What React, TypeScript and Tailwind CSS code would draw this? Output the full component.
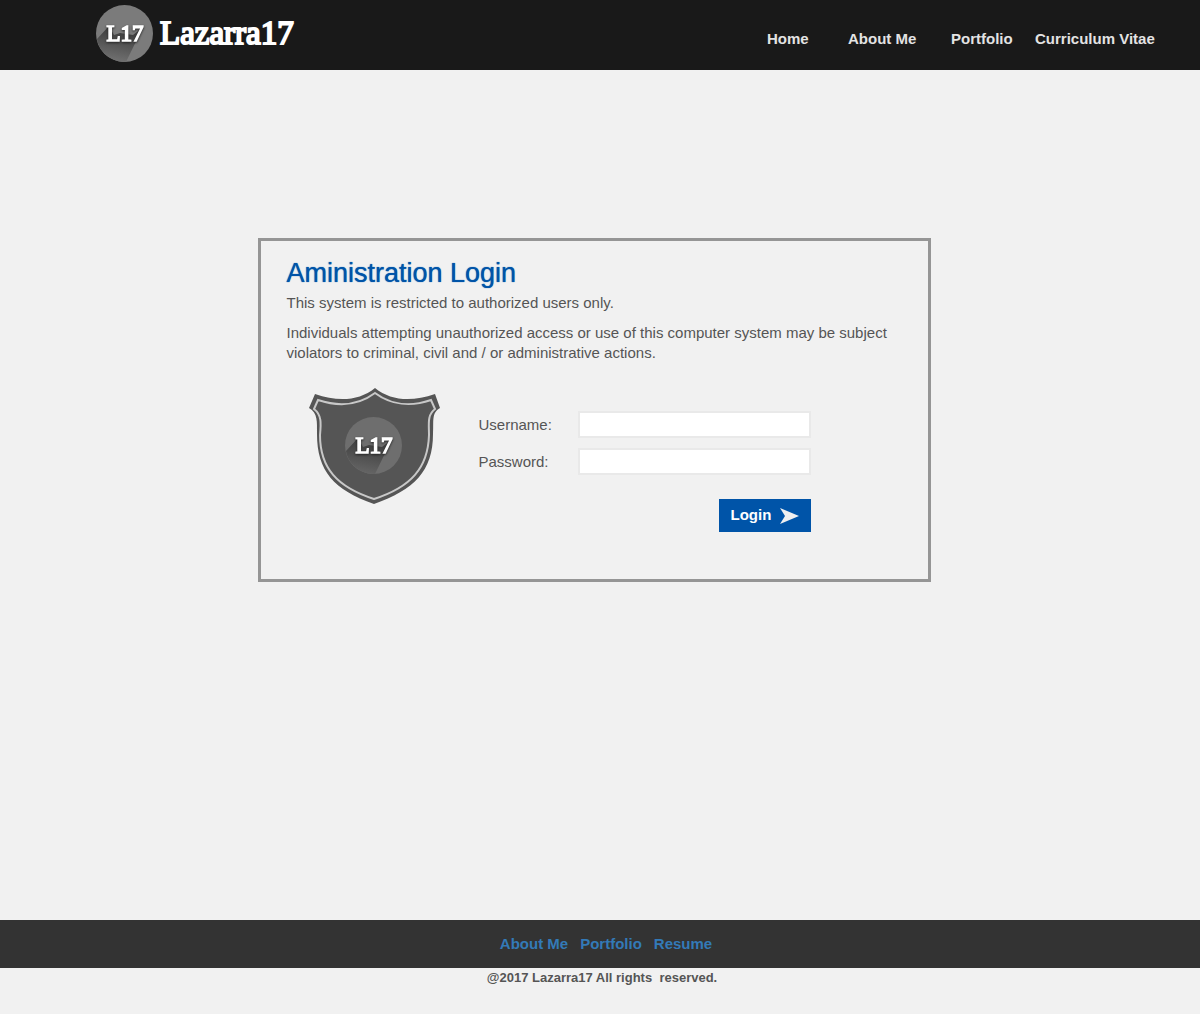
import { useId } from "react";

const navLinks = [
  { label: "Home", width: "w-[81px]" },
  { label: "About Me", width: "w-[103px]" },
  { label: "Portfolio", width: "w-[84px]" },
  { label: "Curriculum Vitae", width: "w-[120px]" },
];

const footerLinks = ["About Me", "Portfolio", "Resume"];

function Emblem({ onShield = false }: { onShield?: boolean }) {
  const id = useId();
  return (
    <g>
      <defs>
        <linearGradient id={id} x1="0.6" y1="0.2" x2="0.4" y2="1">
          <stop offset="0" stopColor="#404040" />
          <stop offset="1" stopColor={onShield ? "#666" : "#727272"} />
        </linearGradient>
      </defs>
      <circle cx="28.5" cy="28.5" r="28.5" fill={onShield ? "#6e6e6e" : "#7b7b7b"} />
      <path d="M13 21 L1 34 C3 47 15 57 30 57 L47 22 L37 30 L24 28 L18 30 Z" fill={`url(#${id})`} />
      <text
        x="29"
        y="36"
        textAnchor="middle"
        fill="#fff"
        stroke="#fff"
        strokeWidth="1.5"
        className="font-['Liberation_Serif',serif] text-[23px] drop-shadow-[0_1px_1px_#222]"
      >
        L17
      </text>
    </g>
  );
}

function Shield() {
  return (
    <svg width="132" height="117" viewBox="0 0 132 117" role="img" aria-label="L17 shield">
      <path
        d="M66 0 C82 13 103 14 126 6 L131 20 C122 25 125 34 124 46 C124 83 105 102 65 116 C25 102 8 83 8 46 C8 34 9 25 0 20 L6 6 C29 14 50 13 66 0 Z"
        fill="#555"
      />
      <path
        d="M66 5 C82 17 102 19 122 12 L126 21 C118 27 120 36 120 47 C119 80 102 99 65 111 C28 99 11 80 11 47 C12 36 13 27 5 21 L9 12 C30 19 50 17 66 5 Z"
        fill="none"
        stroke="#c8c8c8"
        strokeWidth="2"
      />
      <g transform="translate(36 29)">
        <Emblem onShield />
      </g>
    </svg>
  );
}

export default function App() {
  return (
    <div className="flex min-h-screen flex-col bg-[#f1f1f1] font-['Liberation_Sans',Arial,sans-serif] text-[15px] leading-5 text-[#555]">
      <header className="flex h-[70px] items-center justify-between bg-[#191919] pr-[45px] pl-24">
        <a href="#home" className="flex items-center gap-[7px] pb-1 text-white">
          <svg width="57" height="57" viewBox="0 0 57 57" aria-hidden="true">
            <Emblem />
          </svg>
          <span className="font-['Liberation_Serif',serif] text-[33px] leading-9 [-webkit-text-stroke:2px_white]">
            Lazarra17
          </span>
        </a>
        <nav className="flex pt-2 font-bold text-[#e3e3e3]">
          {navLinks.map((link) => (
            <a key={link.label} href="#nav" className={`${link.width} whitespace-nowrap`}>
              {link.label}
            </a>
          ))}
        </nav>
      </header>

      <main className="flex-1 px-4 pt-[168px] pb-20">
        <section className="mx-auto max-w-[673px] border-[3px] border-[#959595] px-[26px] pt-4 pb-[47px] min-[1100px]:relative min-[1100px]:-left-1.5">
          <h1 className="text-[27px] leading-8 text-[#0054a8] [text-shadow:0_0_1px_currentColor]">
            Aministration Login
          </h1>
          <p className="mt-1">This system is restricted to authorized users only.</p>
          <p className="mt-2.5">
            Individuals attempting unauthorized access or use of this computer system may be
            subject violators to criminal, civil and / or administrative actions.
          </p>
          <div className="mt-[25px] flex flex-wrap gap-x-[38px] gap-y-6 pl-[22px]">
            <Shield />
            <form
              className="flex w-[332px] flex-col gap-[10px] pt-[23px]"
              onSubmit={(event) => event.preventDefault()}
            >
              <div className="flex items-center justify-between">
                <label htmlFor="username">Username:</label>
                <input
                  id="username"
                  type="text"
                  className="h-[27px] w-[233px] border-2 border-[#e9e9e9] bg-white px-1"
                />
              </div>
              <div className="flex items-center justify-between">
                <label htmlFor="password">Password:</label>
                <input
                  id="password"
                  type="password"
                  className="h-[27px] w-[233px] border-2 border-[#e9e9e9] bg-white px-1"
                />
              </div>
              <button
                type="submit"
                className="mt-[14px] flex h-[33px] w-[92px] items-center justify-between self-end bg-[#0054a8] px-3 font-bold text-white"
              >
                <span className="pb-0.5">Login</span>
                <svg width="19" height="16" viewBox="0 0 19 16" aria-hidden="true">
                  <path d="M0 0 L19 8 L0 16 L5 8 Z" fill="#f0f0f0" />
                </svg>
              </button>
            </form>
          </div>
        </section>
      </main>

      <footer className="h-[94px] text-center">
        <nav className="flex h-12 items-center justify-center gap-3 bg-[#333] pl-3 font-bold text-[#337ab7]">
          {footerLinks.map((label) => (
            <a key={label} href="#footer">
              {label}
            </a>
          ))}
        </nav>
        <p className="pl-1 text-[13px] leading-5 font-bold whitespace-pre">
          {"@2017 Lazarra17 All rights  reserved."}
        </p>
      </footer>
    </div>
  );
}
